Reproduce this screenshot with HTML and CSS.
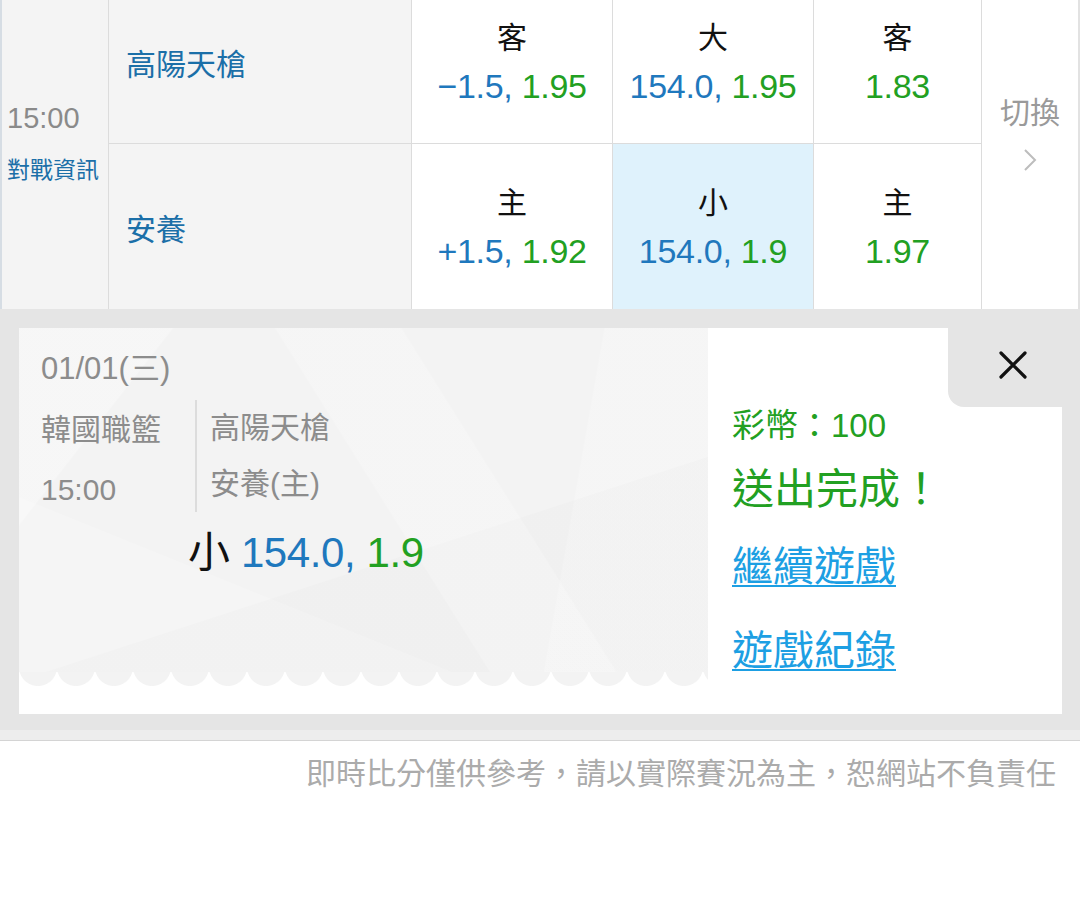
FILE: index.html
```html
<!DOCTYPE html>
<html lang="zh-Hant">
<head>
<meta charset="utf-8">
<title>投注完成</title>
<link rel="stylesheet" href="styles.css">
</head>
<body>
<div class="match">
  <div class="c-time">
    <span class="time">15:00</span>
    <span class="info">對戰資訊</span>
  </div>
  <div class="c-team r1">高陽天槍</div>
  <div class="c-odd r1"><span class="lab">客</span><span class="val"><span class="b">−1.5,</span> <span class="g">1.95</span></span></div>
  <div class="c-odd r1"><span class="lab">大</span><span class="val"><span class="b">154.0,</span> <span class="g">1.95</span></span></div>
  <div class="c-odd r1"><span class="lab">客</span><span class="val"><span class="g">1.83</span></span></div>
  <div class="c-switch">
    <span class="sw-text">切換</span>
    <svg class="chev" width="14" height="24" viewBox="0 0 14 24"><polyline points="2,2 12,12 2,22" fill="none" stroke="#bdbdbd" stroke-width="2"/></svg>
  </div>
  <div class="c-team">安養</div>
  <div class="c-odd"><span class="lab">主</span><span class="val"><span class="b">+1.5,</span> <span class="g">1.92</span></span></div>
  <div class="c-odd sel"><span class="lab">小</span><span class="val"><span class="b">154.0,</span> <span class="g">1.9</span></span></div>
  <div class="c-odd"><span class="lab">主</span><span class="val"><span class="g">1.97</span></span></div>
</div>

<div class="ticket-wrap">
  <div class="ticket">
    <div class="ticket-left">
      <div class="ticket-body">
        <div class="date">01/01(三)</div>
        <div class="info-row">
          <div class="league">
            <div>韓國職籃</div>
            <div class="num">15:00</div>
          </div>
          <div class="teams">
            <div>高陽天槍</div>
            <div>安養(主)</div>
          </div>
        </div>
        <div class="bet"><span class="bk">小</span> <span class="b">154.0,</span> <span class="g">1.9</span></div>
      </div>
      <div class="wave"></div>
      <div class="ticket-gap"></div>
    </div>
    <div class="ticket-right">
      <div class="close-tab">
        <svg width="30" height="30" viewBox="0 0 30 30"><path d="M3 3 L27 27 M27 3 L3 27" stroke="#111" stroke-width="3.2" stroke-linecap="round" fill="none"/></svg>
      </div>
      <div class="coins">彩幣：100</div>
      <div class="done">送出完成！</div>
      <a class="link first" href="#">繼續遊戲</a>
      <a class="link second" href="#">遊戲紀錄</a>
    </div>
  </div>
</div>

<div class="footer">即時比分僅供參考，請以實際賽況為主，恕網站不負責任</div>
</body>
</html>
```

FILE: styles.css
```css
html, body {
  margin: 0;
  padding: 0;
  background: #ffffff;
}
body {
  width: 1080px;
  font-family: "Liberation Sans", "Noto Sans CJK TC", sans-serif;
  color: #111;
}

.b { color: #1f78bd; }
.g { color: #22a022; }

/* ---------- match table ---------- */
.match {
  display: grid;
  grid-template-columns: 106px 302px 200px 200px 167px 1fr;
  grid-template-rows: 143px 165px;
  gap: 1px;
  background: #dcdcdc;
  border-left: 2px solid #d6dde4;
  border-right: 2px solid #e2e2e2;
}
.c-time {
  grid-row: span 2;
  background: #f4f4f4;
  display: flex;
  flex-direction: column;
  justify-content: center;
  padding: 0 0 24px 5px;
}
.time {
  font-size: 29px;
  line-height: 36px;
  color: #8a8a8a;
}
.info {
  font-size: 23px;
  line-height: 30px;
  margin-top: 19px;
  color: #1b6fa8;
}
.c-team {
  background: #f4f4f4;
  display: flex;
  align-items: center;
  padding-left: 17px;
  font-size: 30px;
  color: #1b6fa8;
}
.c-odd {
  background: #ffffff;
  display: flex;
  flex-direction: column;
  align-items: center;
  justify-content: center;
}
.c-odd.sel { background: #dff2fc; }
.r1 { padding-bottom: 20px; }
.c-team.r1 { padding-bottom: 20px; }
.lab {
  font-size: 30px;
  line-height: 40px;
  color: #111;
}
.val {
  font-size: 34px;
  line-height: 40px;
  margin-top: 8px;
  white-space: nowrap;
  letter-spacing: -0.3px;
}
.c-switch {
  grid-row: span 2;
  background: #ffffff;
  display: flex;
  flex-direction: column;
  align-items: center;
  justify-content: center;
  padding-bottom: 44px;
}
.sw-text {
  font-size: 30px;
  line-height: 40px;
  color: #9a9a9a;
}
.chev {
  margin-top: 15px;
  display: block;
}

/* ---------- ticket ---------- */
.ticket-wrap {
  background: #e5e5e5;
  padding: 19px 18px 16px 19px;
  border-bottom: 10px solid #ededed;
  box-shadow: 0 1px 0 #d4d4d4;
}
.ticket {
  display: flex;
  height: 386px;
}
.ticket-left {
  width: 689px;
  display: flex;
  flex-direction: column;
  background: #ffffff;
}
.ticket-body {
  flex: 1;
  padding: 21px 0 0 22px;
  background-color: #f3f3f3;
  background-image:
    linear-gradient(128deg, rgba(255,255,255,0.3) 0 16%, transparent 16.2%),
    linear-gradient(58deg, transparent 52%, rgba(255,255,255,0.22) 52.2% 66%, transparent 66.2%),
    linear-gradient(162deg, transparent 62%, rgba(0,0,0,0.012) 62.2%),
    linear-gradient(22deg, rgba(255,255,255,0.2) 0 28%, transparent 28.2%),
    linear-gradient(100deg, transparent 78%, rgba(255,255,255,0.22) 78.2%);
}
.date {
  font-size: 31px;
  line-height: 40px;
  color: #8c8c8c;
}
.info-row {
  display: flex;
  margin-top: 11px;
  color: #8c8c8c;
  font-size: 30px;
  align-items: flex-start;
}
.league {
  width: 154px;
  line-height: 60px;
}
.league .num { font-size: 30px; }
.teams {
  border-left: 2px solid #dcdcdc;
  padding-left: 13px;
  line-height: 56px;
}
.bet {
  margin-left: 147px;
  margin-top: 9px;
  font-size: 42px;
  line-height: 48px;
  letter-spacing: -0.4px;
}
.bk { color: #111; }
.wave {
  height: 15px;
  background-color: #ffffff;
  background-image: radial-gradient(circle at 19px -5px, #f3f3f3 18.5px, rgba(243,243,243,0) 19.5px);
  background-size: 38px 15px;
  background-repeat: repeat-x;
}
.ticket-gap {
  height: 27px;
}
.ticket-right {
  flex: 1;
  background: #ffffff;
  display: flex;
  flex-direction: column;
  align-items: flex-start;
  padding-left: 24px;
}
.close-tab {
  align-self: flex-end;
  width: 114px;
  height: 79px;
  box-sizing: border-box;
  background: #e5e5e5;
  border-bottom-left-radius: 16px;
  display: flex;
  align-items: center;
  justify-content: center;
  padding: 0 0 5px 16px;
}
.close-tab svg { display: block; }
.coins {
  font-size: 33px;
  line-height: 40px;
  margin-top: -1px;
  color: #22a022;
}
.done {
  font-size: 42px;
  line-height: 56px;
  margin-top: 16px;
  color: #22a022;
}
.link {
  font-size: 41px;
  line-height: 52px;
  color: #1d9fe3;
  text-decoration: underline;
  text-decoration-thickness: 2px;
  text-underline-offset: 4px;
}
.link.first { margin-top: 23px; }
.link.second { margin-top: 32px; }

/* ---------- footer ---------- */
.footer {
  margin-top: 14px;
  padding-right: 24px;
  text-align: right;
  font-size: 30px;
  line-height: 40px;
  color: #ababab;
}
```
